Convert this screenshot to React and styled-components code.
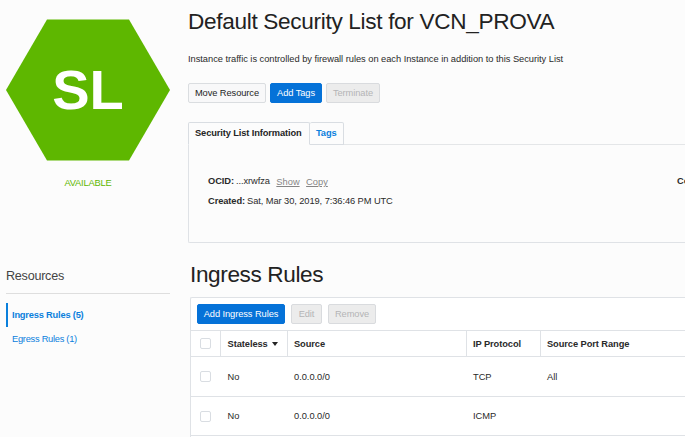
import React from "react";
import styled, { createGlobalStyle, css } from "styled-components";

const GlobalStyle = createGlobalStyle`
  *, *::before, *::after { box-sizing: border-box; }
  body {
    margin: 0;
    background: #fcfcfc;
    color: #2a2a2a;
    font-family: "Liberation Sans", Arial, Helvetica, sans-serif;
    font-size: 9.3px;
    line-height: 12px;
  }
`;

const Page = styled.div`
  display: grid;
  grid-template-columns: 164px minmax(0, 1fr);
  grid-template-rows: 243px 194px;
  column-gap: 18px;
  width: 685px;
  height: 437px;
  padding-left: 6px;
  overflow: hidden;
  white-space: nowrap;
`;

const Badge = styled.div`
  display: flex;
  flex-direction: column;
  padding-top: 19px;
`;

const Hexagon = styled.div`
  display: flex;
  align-items: center;
  justify-content: center;
  height: 142px;
  clip-path: polygon(25% 0.5px, 75% 0.5px, 100% 50%, 75% 141.5px, 25% 141.5px, 0 50%);
  background: #5eb700;
  color: #fff;
  font-size: 56px;
  font-weight: 700;
  line-height: 56px;
`;

const Status = styled.div`
  margin-top: 16px;
  color: #5eb700;
  letter-spacing: -0.18px;
  text-align: center;
`;

const Details = styled.main`
  display: flex;
  flex-direction: column;
`;

const Title = styled.h1`
  margin: 8px 0 0;
  color: #222;
  font-size: 22.6px;
  font-weight: 400;
  letter-spacing: -0.32px;
  line-height: 28px;
`;

const Description = styled.p`
  margin: 17px 0 0;
  letter-spacing: -0.03px;
`;

const Actions = styled.div`
  display: flex;
  gap: ${(p) => p.$gap}px;
  margin-top: ${(p) => p.$top || 0}px;
`;

const variants = {
  plain: css`background: #f8f8f9; border-color: #dadde0; color: #242424;`,
  primary: css`background: #0572d8; border-color: #0572d8; color: #fff;`,
  disabled: css`background: #ececec; border-color: #d9dbde; color: #b4b4b6;`,
};

const Button = styled.button`
  flex: none;
  width: ${(p) => p.$width}px;
  height: 20px;
  padding: 0;
  border: 1px solid;
  border-radius: 2px;
  font: inherit;
  letter-spacing: -0.08px;
  line-height: 18px;
  text-align: center;
  ${(p) => variants[p.$variant]}
`;

const Tabs = styled.div`
  display: flex;
  height: 23px;
  margin-top: 19px;
`;

const Tab = styled.div`
  width: ${(p) => p.$width}px;
  border: 1px solid #d9dde2;
  border-left-width: ${(p) => (p.$active ? 1 : 0)}px;
  border-bottom-color: ${(p) => (p.$active ? "transparent" : "#d9dde2")};
  border-radius: 2px 2px 0 0;
  color: ${(p) => (p.$active ? "#242424" : "#0b80dc")};
  font-weight: 700;
  letter-spacing: -0.12px;
  line-height: 21px;
  padding-left: 6px;
`;

const TabRule = styled.div`
  flex: 1;
  border-bottom: 1px solid #e4e6e8;
`;

const InfoPanel = styled.section`
  display: flex;
  height: 98px;
  padding: 30px 0 0 19px;
  border-left: 1px solid #dfe2e6;
  border-bottom: 1px solid #dfe2e6;
  border-radius: 0 0 0 2px;
`;

const InfoColumn = styled.div`
  flex: none;
  width: ${(p) => p.$width}px;
  letter-spacing: -0.08px;
`;

const InfoLine = styled.div`
  display: flex;
  gap: 2px;
  height: 20px;
`;

const TextLink = styled.a`
  margin: 1px 0 0 4.5px;
  color: #858585;
  letter-spacing: 0;
  text-decoration: underline;
`;

const Sidebar = styled.nav`
  padding-top: 25px;
`;

const SidebarTitle = styled.h2`
  height: 26px;
  margin: 0 0 9px;
  border-bottom: 1px solid #dedede;
  color: #444;
  font-size: 12.6px;
  font-weight: 400;
  letter-spacing: -0.25px;
  line-height: 16px;
`;

const SidebarLink = styled.a`
  display: block;
  height: 24px;
  padding-left: ${(p) => (p.$active ? 4 : 6)}px;
  border-left: ${(p) => (p.$active ? "2px solid #0b80dc" : "0")};
  color: #0b80dc;
  font-weight: ${(p) => (p.$active ? 700 : 400)};
  letter-spacing: ${(p) => (p.$active ? -0.2 : -0.27)}px;
  line-height: 24px;
`;

const Rules = styled.section`
  padding: 18px 0 0 2px;
`;

const RulesTitle = styled.h2`
  margin: 0 0 8px;
  color: #222;
  font-size: 22.6px;
  font-weight: 400;
  letter-spacing: -0.38px;
  line-height: 28px;
`;

const RulesPanel = styled.div`
  border: 1px solid #dfe2e6;
  border-right: 0;
  border-radius: 2px 0 0 0;
  background: #fff;
`;

const Toolbar = styled.div`
  height: 32px;
  padding: 6px;
`;

const Row = styled.div`
  display: grid;
  grid-template-columns: 29px 67px 179px 74px 1fr;
  height: ${(p) => p.$height}px;
  border-top: 1px solid #dfe2e6;
  font-weight: ${(p) => (p.$header ? 700 : 400)};
  letter-spacing: ${(p) => (p.$header ? -0.08 : -0.03)}px;
`;

const Cell = styled.div`
  display: flex;
  align-items: center;
  padding-left: ${(p) => (p.$check ? 8 : p.$first ? 6.6 : 6)}px;
  border-left: 1px solid ${(p) => (p.$ruled ? "#dfe2e6" : "transparent")};
`;

const Checkbox = styled.span`
  width: 11px;
  height: 11px;
  border: 1px solid #d9dde2;
  border-radius: 2px;
  background: #fff;
`;

const SortArrow = styled.svg`
  margin-left: 4px;
`;

const columns = ["Stateless", "Source", "IP Protocol", "Source Port Range"];
const rules = [
  ["No", "0.0.0.0/0", "TCP", "All"],
  ["No", "0.0.0.0/0", "ICMP", ""],
  ["", "", "", ""],
];

export default function App() {
  return (
    <>
      <GlobalStyle />
      <Page>
        <Badge>
          <Hexagon>SL</Hexagon>
          <Status>AVAILABLE</Status>
        </Badge>
        <Details>
          <Title>Default Security List for VCN_PROVA</Title>
          <Description>
            Instance traffic is controlled by firewall rules on each Instance in addition to this Security List
          </Description>
          <Actions $gap={4} $top={18}>
            <Button $variant="plain" $width={78}>Move Resource</Button>
            <Button $variant="primary" $width={52}>Add Tags</Button>
            <Button $variant="disabled" $width={54} disabled>Terminate</Button>
          </Actions>
          <Tabs>
            <Tab $active $width={122}>Security List Information</Tab>
            <Tab $width={34}>Tags</Tab>
            <TabRule />
          </Tabs>
          <InfoPanel>
            <InfoColumn $width={469}>
              <InfoLine>
                <b>OCID:</b>
                <span>...xrwfza</span>
                <TextLink>Show</TextLink>
                <TextLink>Copy</TextLink>
              </InfoLine>
              <InfoLine>
                <b>Created:</b>
                <span>Sat, Mar 30, 2019, 7:36:46 PM UTC</span>
              </InfoLine>
            </InfoColumn>
            <InfoColumn $width={100}>
              <b>Compartment:</b>
            </InfoColumn>
          </InfoPanel>
        </Details>
        <Sidebar>
          <SidebarTitle>Resources</SidebarTitle>
          <SidebarLink $active>Ingress Rules (5)</SidebarLink>
          <SidebarLink>Egress Rules (1)</SidebarLink>
        </Sidebar>
        <Rules>
          <RulesTitle>Ingress Rules</RulesTitle>
          <RulesPanel>
            <Toolbar>
              <Actions $gap={6}>
                <Button $variant="primary" $width={88}>Add Ingress Rules</Button>
                <Button $variant="disabled" $width={31} disabled>Edit</Button>
                <Button $variant="disabled" $width={48} disabled>Remove</Button>
              </Actions>
            </Toolbar>
            <Row $header $height={26}>
              <Cell $check><Checkbox /></Cell>
              {columns.map((name, i) => (
                <Cell key={name} $ruled $first={i === 0}>
                  {name}
                  {i === 0 && (
                    <SortArrow width="6" height="4" viewBox="0 0 6 4">
                      <path d="M0 0H6L3 4Z" fill="#242424" />
                    </SortArrow>
                  )}
                </Cell>
              ))}
            </Row>
            {rules.map((rule, i) => (
              <Row key={i} $height={i === 0 ? 40 : 39}>
                <Cell $check><Checkbox /></Cell>
                {rule.map((value, j) => (
                  <Cell key={j} $first={j === 0}>{value}</Cell>
                ))}
              </Row>
            ))}
          </RulesPanel>
        </Rules>
      </Page>
    </>
  );
}
